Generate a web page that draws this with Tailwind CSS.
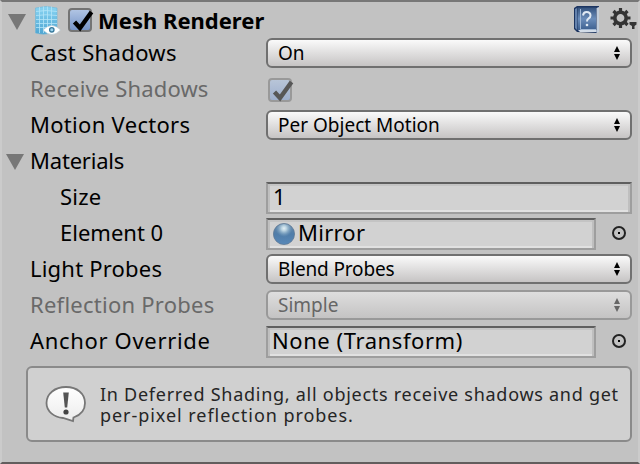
<!DOCTYPE html>
<html lang="en"><head><meta charset="utf-8"><title>Mesh Renderer</title>
<script src="https://cdn.jsdelivr.net/npm/@tailwindcss/browser@4"></script></head>
<body class="w-[640px] h-[464px] overflow-hidden bg-[#c2c2c2] font-['Noto_Sans',sans-serif] text-[22px] leading-[30px] text-black">
<svg class="absolute h-0 w-0">
  <defs>
    <linearGradient id="ball" x1="0" y1="0" x2="0" y2="1"><stop offset="0" stop-color="#6b8caa"/><stop offset=".5" stop-color="#507da9"/><stop offset="1" stop-color="#5888b8"/></linearGradient>
    <radialGradient id="shine" cx=".5" cy=".22" r=".42"><stop offset="0" stop-color="#e4f1f6"/><stop offset=".3" stop-color="#b9d2e0"/><stop offset="1" stop-color="#7fa5c4" stop-opacity="0"/></radialGradient>
    <linearGradient id="mesh" x1="0" y1="0" x2="0" y2="1"><stop offset="0" stop-color="#8ad5f3"/><stop offset="1" stop-color="#4ea5d2"/></linearGradient>
    <linearGradient id="book" x1="0" y1="0" x2="0" y2="1"><stop offset="0" stop-color="#34527d"/><stop offset=".5" stop-color="#6b8dba"/><stop offset="1" stop-color="#3d6090"/></linearGradient>
    <linearGradient id="bubble" x1="0" y1="0" x2="0" y2="1"><stop offset="0" stop-color="#fff"/><stop offset="1" stop-color="#ececec"/></linearGradient>
  </defs>
  <symbol id="arrows" viewBox="0 0 8 14"><path d="M4 0L7 6H1zM1 8H7L4 14z" fill="currentColor"/></symbol>
  <symbol id="fold" viewBox="0 0 18 16"><path d="M0 0H18L9 16z" fill="#777"/></symbol>
  <symbol id="check" viewBox="0 0 28 26"><path d="M5.500 14L11 20L22.500 4" fill="none" stroke="currentColor" stroke-width="4.400"/></symbol>
  <symbol id="picker" viewBox="0 0 16 16"><circle cx="8" cy="8" r="6" fill="none" stroke="#222" stroke-width="2"/><path d="M7 7h2v2H7z" fill="#000"/></symbol>
</svg>
<main class="flex h-full flex-col border-x-2 border-t-2 border-b-2 border-x-[#cbcbcb] border-t-[#777] border-b-[#625d5d]">
  <header class="flex h-[33px] shrink-0 items-start pl-[6px]">
    <svg class="mt-3 h-4 w-[18px]"><use href="#fold"/></svg>
    <svg class="ml-[8px] mt-[3px] h-[30px] w-[28px]" viewBox="0 0 28 30">
      <path d="M1.500 3Q12 0 23 3V26Q12 31 1.500 28z" fill="url(#mesh)" stroke="#6db7d9" stroke-width=".6"/>
      <path d="M5.500 2V28M9.500 1.500V28M13.500 1.500V28M17.500 1.500V28M2 6.500Q12 4.500 23 6.500M2 10.500Q12 9 23 10.500M2 14.500H23M2 18.500H23M2 22.500H23" fill="none" stroke="#b4e4f7" stroke-width=".8"/>
      <path d="M9 25Q18 16 26.500 25Q18 34 9 25z" fill="#fff" stroke="#a5c0cd" stroke-width=".5"/>
      <circle cx="17.800" cy="24.800" r="2.200" fill="#9bd3ee" stroke="#38799c" stroke-width="1.300"/>
    </svg>
    <div class="ml-[6px] mt-[6px] h-6 w-6 shrink-0 rounded-[4px] border-2 border-[#747474] bg-linear-to-b from-[#b0c4e3] to-[#7795c8]"><svg class="-ml-[1px] -mt-[2px] h-[26px] w-[28px] max-w-none"><use href="#check"/></svg></div>
    <h1 class="ml-[6px] mt-[3px] whitespace-nowrap font-bold"><span>Mesh Renderer</span></h1>
    <svg class="ml-auto mt-[4px] h-[28px] w-[26px]" viewBox="0 0 26 28">
      <path d="M0 2L3 0H25L23 27L3 26L0 23z" fill="#1c3561"/>
      <path d="M22.500 2L25 1V26L22.500 27z" fill="#c3cedb"/>
      <path d="M4 24H22.500V26H6z" fill="#d2dce7"/>
      <path d="M3.500 1.500H22V24H3.500z" fill="url(#book)"/>
      <path d="M6.500 3V23.500M6.500 23.500H22" fill="none" stroke="#a1b8d5" stroke-width="1"/>
      <path d="M1 3L3 2V24L1 22z" fill="#6482ad"/>
      <path d="M9 9.500Q9.500 6 12.500 6Q16.500 6 16.500 9.500Q16.500 11.500 14.500 12.500Q13 13.500 13 15.500" fill="none" stroke="#e0e9f3" stroke-width="2"/><circle cx="13" cy="19" r="1.300" fill="#e0e9f3"/>
    </svg>
    <svg class="ml-[10px] mt-[6px] h-[24px] w-[28px] shrink-0" viewBox="0 0 28 24">
      <g transform="translate(10.500 10)" fill="none" stroke="#343434"><circle r="5.700" stroke-width="3.600"/><path d="M0-6V-10M0 6V10M-6 0H-10M6 0H10M-4.500-4.500L-7-7M4.500-4.500L7-7M-4.500 4.500L-7 7M4.500 4.500L7 7" stroke-width="3.200"/></g>
      <path d="M19.500 14H26.500V16.500L24.500 18V21H22V18L19.500 16.500z" fill="#343434"/>
    </svg>
  </header>
  <section class="grid shrink-0 auto-rows-[36px] grid-cols-[236px_366px] pl-[28px] whitespace-nowrap">
    <label class="pt-[2px]"><span class="tracking-[0.35px]">Cast Shadows</span></label>
    <div class="mt-[3px] flex h-[30px] items-center justify-between rounded-[6px] border-2 border-[#707070] bg-linear-to-b from-[#fafafa] to-[#c6c4c4] pl-[10px] pr-[9px] text-[19px]"><span>On</span><svg class="h-[14px] w-2"><use href="#arrows"/></svg></div>
    <label class="pt-[2px] text-[#696969]"><span class="tracking-[0.15px]">Receive Shadows</span></label>
    <div class="ml-[2px] mt-[7px] h-6 w-6 rounded-[4px] border-2 border-[#999] bg-linear-to-b from-[#b8c5d8] to-[#9eafcd] text-[#575757]"><svg class="-ml-[1px] -mt-[2px] h-[26px] w-[28px] max-w-none"><use href="#check"/></svg></div>
    <label class="pt-[2px]"><span class="tracking-[0.3px]">Motion Vectors</span></label>
    <div class="mt-[3px] flex h-[30px] items-center justify-between rounded-[6px] border-2 border-[#707070] bg-linear-to-b from-[#fafafa] to-[#c6c4c4] pl-[10px] pr-[9px] text-[19px]"><span>Per Object Motion</span><svg class="h-[14px] w-2"><use href="#arrows"/></svg></div>
    <div class="col-span-2 -ml-[24px] flex pt-[2px]"><svg class="mt-[9px] h-4 w-[18px]"><use href="#fold"/></svg><span class="ml-[6px] tracking-[-0.2px]">Materials</span></div>
    <label class="pl-[30px] pt-[2px]"><span class="tracking-[0.2px]">Size</span></label>
    <div class="mt-[3px] h-8 border-2 border-[#9e9e9e] border-t-[#5f5f5f] bg-[#d2d2d2] pl-[5px] leading-[25px] shadow-[inset_2px_0_#bfbfbf,inset_-2px_0_#bfbfbf,inset_0_2px_#c4c4c4,inset_0_-2px_#e1e1e1]"><span>1</span></div>
    <label class="pl-[30px] pt-[2px]"><span>Element 0</span></label>
    <div class="flex items-start pt-[3px]"><div class="flex h-8 w-[330px] border-2 border-[#9e9e9e] border-t-[#5f5f5f] bg-[#d2d2d2] pl-[5px] leading-[25px] shadow-[inset_2px_0_#bfbfbf,inset_-2px_0_#bfbfbf,inset_0_2px_#c4c4c4,inset_0_-2px_#e1e1e1]"><svg class="mt-[3px] h-[22px] w-[22px]" viewBox="0 0 22 22"><circle cx="11" cy="11" r="10.600" fill="url(#ball)" stroke="#5d7690" stroke-width=".7"/><circle cx="11" cy="11" r="10" fill="url(#shine)"/></svg><span class="ml-[3px] tracking-[0.25px]">Mirror</span></div><svg class="ml-[15px] mt-[7px] h-4 w-4"><use href="#picker"/></svg></div>
    <label class="pt-[2px]"><span class="tracking-[0.2px]">Light Probes</span></label>
    <div class="mt-[3px] flex h-[30px] items-center justify-between rounded-[6px] border-2 border-[#707070] bg-linear-to-b from-[#fafafa] to-[#c6c4c4] pl-[10px] pr-[9px] text-[19px]"><span class="tracking-[-0.15px]">Blend Probes</span><svg class="h-[14px] w-2"><use href="#arrows"/></svg></div>
    <label class="pt-[2px] text-[#696969]"><span class="tracking-[0.25px]">Reflection Probes</span></label>
    <div class="mt-[3px] flex h-[30px] items-center justify-between rounded-[6px] border-2 border-[#999] bg-linear-to-b from-[#dedede] to-[#c4c3c3] pl-[10px] pr-[9px] text-[19px] text-[#666]"><span>Simple</span><svg class="h-[14px] w-2"><use href="#arrows"/></svg></div>
    <label class="pt-[2px]"><span class="tracking-[0.67px]">Anchor Override</span></label>
    <div class="flex items-start pt-[3px]"><div class="h-8 w-[330px] border-2 border-[#9e9e9e] border-t-[#5f5f5f] bg-[#d2d2d2] pl-[4px] leading-[25px] shadow-[inset_2px_0_#bfbfbf,inset_-2px_0_#bfbfbf,inset_0_2px_#c4c4c4,inset_0_-2px_#e1e1e1]"><span class="tracking-[0.57px]">None (Transform)</span></div><svg class="ml-[15px] mt-[7px] h-4 w-4"><use href="#picker"/></svg></div>
  </section>
  <aside class="ml-[24px] mt-[7px] flex h-[76px] w-[606px] shrink-0 rounded-[6px] border-2 border-[#8a8a8a] bg-[#d0d0d0] pl-[17px]">
    <svg class="mt-[17px] h-[38px] w-[42px] shrink-0" viewBox="0 0 42 38"><path d="M21 2C10 2 1.500 8.500 1.500 18C1.500 26.500 9 32 18 33L28 36L28.500 32.500C36 30 40 25 40 18C40 8.500 32 2 21 2z" fill="url(#bubble)" stroke="#777" stroke-width="1.800"/><path d="M18.200 7.500H23.800L22.200 22.500H19.800z" fill="#555"/><circle cx="21" cy="27" r="2.600" fill="#444"/></svg>
    <p class="ml-[13px] mt-[16px] whitespace-nowrap text-[18px] leading-[21px] text-[#252525]"><span class="block w-fit tracking-[0.73px]">In Deferred Shading, all objects receive shadows and get</span><span class="block w-fit tracking-[0.95px]">per-pixel reflection probes.</span></p>
  </aside>
</main>
</body></html>
